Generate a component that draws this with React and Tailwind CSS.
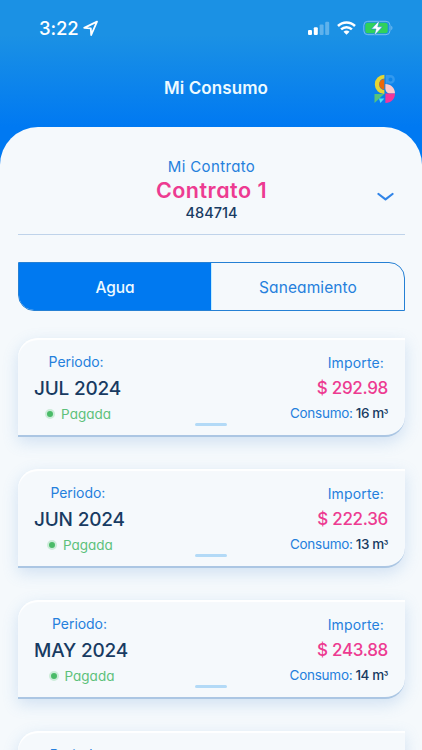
import React from "react";

function StatusBar() {
  return (
    <div className="flex h-[57px] items-center justify-between pl-[39px] pr-[29px]">
      <div className="flex items-center">
        <span className="-mt-[1px] w-[40px] whitespace-nowrap text-[18.5px] leading-[20px] font-medium tracking-[-0.1px]">3:22</span>
        <svg className="-mt-[1px] ml-[3px]" width="18" height="18" viewBox="0 0 18 18" fill="none" stroke="currentColor" strokeWidth="1.8" strokeLinejoin="round">
          <path d="M15 2.6 L2.2 8.9 L8.8 9.4 L9.2 16 Z" />
        </svg>
      </div>
      <div className="-mt-[1px] flex items-center">
        <svg width="22" height="14" viewBox="0 0 22 14" fill="currentColor">
          <rect x="0" y="9" width="4" height="5" rx="1.1" />
          <rect x="5.8" y="6.2" width="4" height="7.8" rx="1.1" />
          <rect x="11.6" y="3.4" width="4" height="10.6" rx="1.1" opacity="0.3" />
          <rect x="17.2" y="0.8" width="4" height="13.2" rx="1.1" opacity="0.3" />
        </svg>
        <svg className="ml-[7px]" width="19" height="14" viewBox="0 0 19 14" fill="none" stroke="currentColor" strokeWidth="2.5">
          <path d="M1 5 C5.8 0.2 13.2 0.2 18 5" />
          <path d="M4.1 8.4 C7.2 5.4 11.8 5.4 14.9 8.4" />
          <path d="M9.5 13.8 L6.5 10.8 C8.3 9.2 10.7 9.2 12.5 10.8 Z" fill="currentColor" stroke="none" />
        </svg>
        <svg className="ml-[7px]" width="30" height="16" viewBox="0 0 30 16" fill="none">
          <rect x="0.8" y="1.3" width="26.2" height="13.4" rx="4" stroke="#79bdf0" strokeWidth="1" />
          <rect x="2.3" y="2.8" width="22.4" height="10.4" rx="2.5" fill="#30d15b" />
          <path d="M28.3 5.8 C29.8 6.4 29.8 9.6 28.3 10.2 Z" fill="#79bdf0" />
          <path d="M16.5 0.3 L8.4 9 H13 L11.2 15.7 L19.4 6.8 H14.8 Z" fill="#fff" stroke="#218bd5" strokeWidth="0.6" />
        </svg>
      </div>
    </div>
  );
}

function Logo() {
  return (
    <svg width="22" height="30" viewBox="0 0 22 30">
      <path d="M10.4 0.8 A9.6 9.6 0 0 0 10.4 20 V16.2 A5.9 5.9 0 0 1 10.4 4.5 Z" fill="#e5d533" />
      <path d="M10.4 5 A5.2 5.2 0 0 0 10.4 15.4 Z" fill="#ec6708" />
      <circle cx="16.5" cy="5.4" r="3.2" fill="none" stroke="#3299ef" strokeWidth="2.4" />
      <path d="M11.8 1 H16 V3.2 H13.5 V9.8 H11.8 Z" fill="#3299ef" />
      <path d="M11.4 10 C17 10 20.9 14 21 19.5 H16.5 C13.5 19.5 11.4 17.5 11.4 14.5 Z" fill="#ffc9ca" />
      <path d="M11.4 19.5 H21 C21 25 17 29 11.4 29 Z" fill="#f5369b" />
      <path d="M0.5 20 H10.2 L0.5 29 Z" fill="#56c37b" />
      <path d="M5 24.5 H10.3 L6.4 29 Z" fill="#4ee1f4" />
    </svg>
  );
}

function BillCard({ month, amount, usage }) {
  return (
    <article className="relative flex h-[99px] shrink-0 justify-between rounded-tl-[20px] rounded-br-[20px] border-b-2 border-[#abc6e3] bg-[#f5f9fc] pl-[16px] pr-[17px] shadow-[inset_0_2px_1px_#ffffff,0_5px_16px_rgba(88,145,210,0.23)]">
      <div className="flex flex-col items-center pt-[14px]">
        <span className="-ml-[3px] text-[14px] leading-[20px] tracking-[-0.05px] text-[#2580dc]">Periodo:</span>
        <span className="mt-[5px] whitespace-nowrap text-[19px] leading-[24px] font-medium tracking-[-0.2px] text-[#183b62]">{month}</span>
        <span className="mt-[3px] ml-[1px] flex items-center text-[13.5px] leading-[20px] text-[#5dc17b]">
          <i className="mr-[6px] -mt-[1px] h-[10px] w-[10px] rounded-full border-2 border-[#ccecd9] bg-[#4abb68]" />
          Pagada
        </span>
      </div>
      <div className="flex flex-col items-end pt-[15px]">
        <span className="mr-[4px] text-[14px] leading-[20px] tracking-[0.15px] text-[#2580dc]">Importe:</span>
        <span className="mt-[3px] whitespace-nowrap text-[17px] leading-[24px] font-medium tracking-[-0.3px] text-[#ed3b91]">{amount}</span>
        <span className="mt-[3px] flex whitespace-nowrap text-[13.5px] leading-[20px] tracking-[-0.25px] text-[#2580dc]">
          Consumo:
          <b className="ml-[3px] font-medium tracking-[-0.4px] text-[#183b62]">
            {usage} m<span className="text-[10px]">³</span>
          </b>
        </span>
      </div>
      <i className="absolute bottom-[9px] left-[177px] h-[3px] w-[32px] rounded-full bg-[#b3daf7]" />
    </article>
  );
}

const bills = [
  { month: "JUL 2024", amount: "$ 292.98", usage: "16" },
  { month: "JUN 2024", amount: "$ 222.36", usage: "13" },
  { month: "MAY 2024", amount: "$ 243.88", usage: "14" },
  { month: "ABR 2024", amount: "$ 231.42", usage: "13" },
];

export default function App() {
  return (
    <div className="h-[750px] w-[422px] overflow-hidden bg-[linear-gradient(to_bottom,#1b91e4_0px,#1b91e4_35px,#0079f2_127px,#0079f2_180px)] font-['Inter',sans-serif] text-white [font-feature-settings:'cv11']">
      <StatusBar />
      <header className="grid h-[70px] grid-cols-[80px_1fr_80px] items-center">
        <span />
        <h1 className="-mt-[9px] ml-[10px] text-center text-[17px] leading-[24px] font-semibold tracking-[0.1px] text-[#eefaff]">Mi Consumo</h1>
        <div className="-mt-[6px] pl-[32px]">
          <Logo />
        </div>
      </header>
      <main className="flex h-[623px] flex-col rounded-t-[38px] bg-[#f5f9fc] px-[18px]">
        <section className="grid h-[108px] w-[387px] shrink-0 grid-cols-[40px_1fr_40px] items-center border-b border-[#bfd3ea]">
          <span />
          <div className="flex flex-col items-center pt-[18px]">
            <span className="text-[15px] leading-[20px] tracking-[0.35px] text-[#2580dc]">Mi Contrato</span>
            <strong className="text-[21.5px] leading-[26px] font-semibold tracking-[0.5px] text-[#ed3b91]">Contrato 1</strong>
            <span className="text-[14.5px] leading-[20px] font-medium text-[#183b62]">484714</span>
          </div>
          <svg className="mt-[32px] ml-[12px]" width="18" height="10" viewBox="0 0 18 10" fill="none" stroke="#3185e8" strokeWidth="2.2" strokeLinecap="round" strokeLinejoin="round">
            <path d="M1.5 2 L8.5 7.4 L15.5 2" />
          </svg>
        </section>
        <nav className="mt-[27px] flex h-[49px] w-[387px] shrink-0 overflow-hidden rounded-tr-[16px] rounded-bl-[16px] border border-[#2580d4] text-[15.5px]">
          <button className="w-[192px] bg-[#0079f0] pt-[2px] font-medium tracking-[-0.1px] text-[#eefaff]">Agua</button>
          <button className="flex-1 border-l border-[#c1eeff] pt-[2px] tracking-[0.1px] text-[#2580dc]">Saneamiento</button>
        </nav>
        <div className="mt-[27px] flex w-[387px] flex-col gap-[32px]">
          {bills.map((bill) => (
            <BillCard key={bill.month} {...bill} />
          ))}
        </div>
      </main>
    </div>
  );
}
